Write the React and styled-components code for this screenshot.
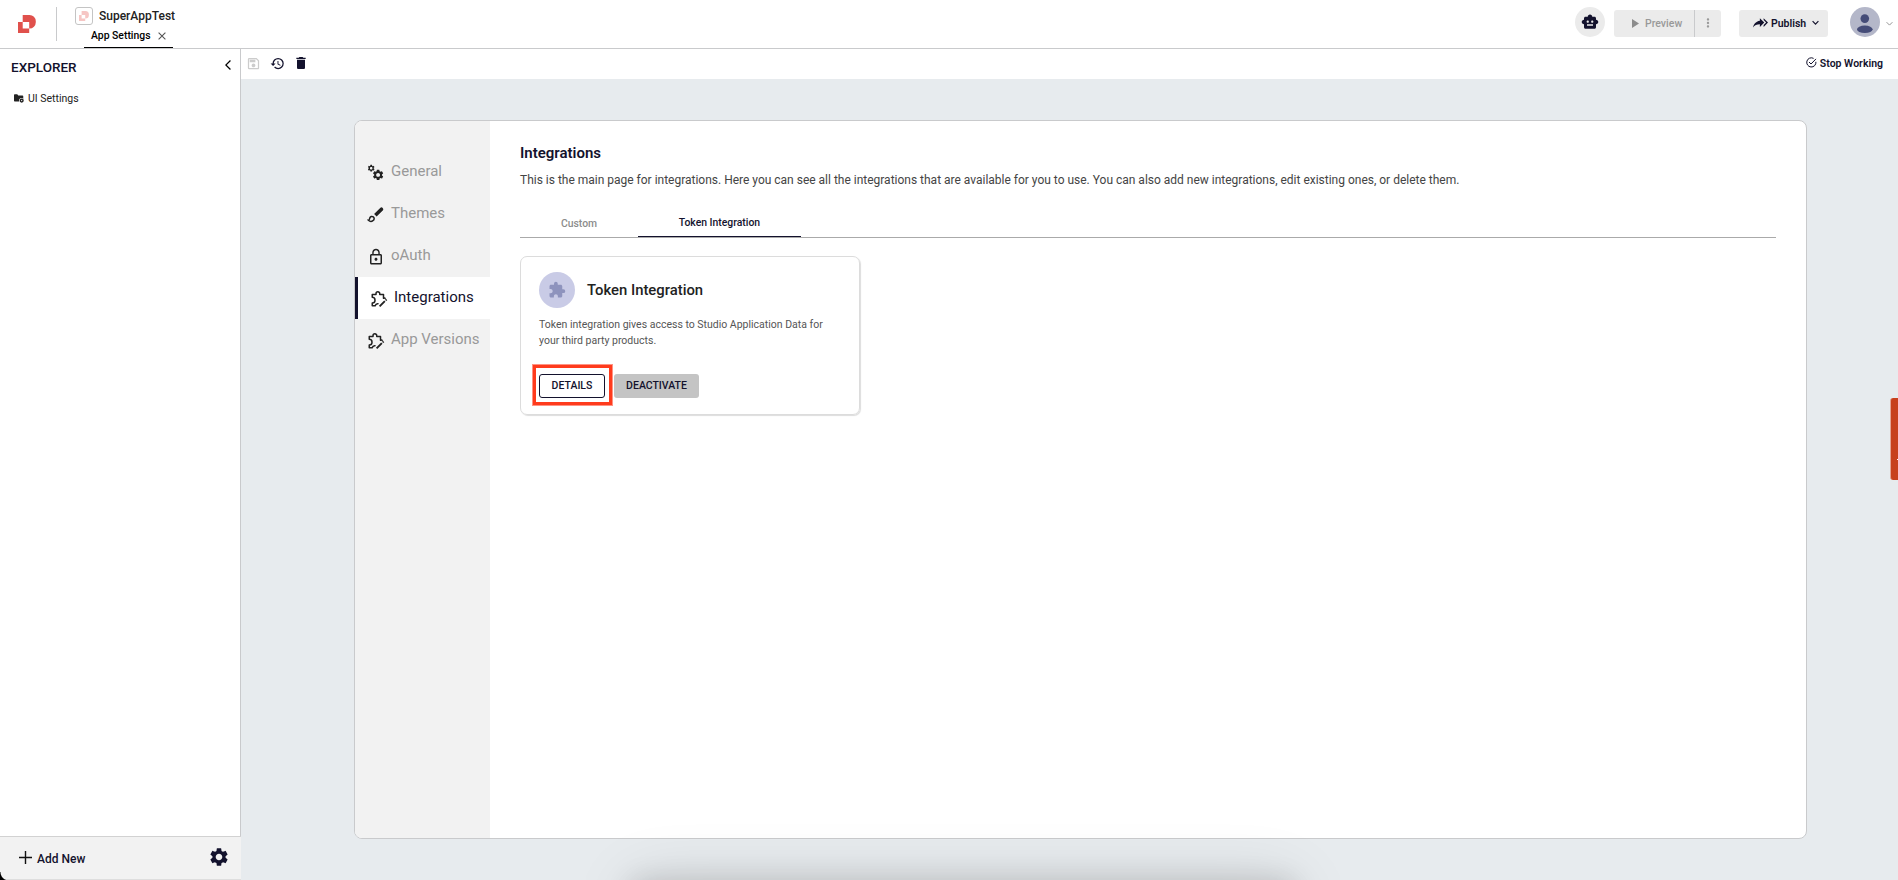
import React from "react";
import styled, { createGlobalStyle, css } from "styled-components";
import {
  MdSmartToy,
  MdHistory,
  MdDelete,
  MdOutlineSave,
  MdArrowBackIosNew,
  MdSettings,
  MdLockOutline,
  MdExtension,
  MdMoreVert,
} from "react-icons/md";

const ink = "#13122d";
const line = "#c9cacc";

const GlobalStyle = createGlobalStyle`
  * { box-sizing: border-box; }
  body {
    margin: 0;
    font-family: Roboto, "Liberation Sans", sans-serif;
    color: ${ink};
    overflow: hidden;
  }
  svg { display: block; flex: none; }
  h1, h2, p { margin: 0; }
  button { font: inherit; color: inherit; padding: 0; border: 0; background: none; }
`;

const Page = styled.div`
  position: relative;
  display: flex;
  flex-direction: column;
  height: 880px;
  overflow: hidden;
  background: #e7ebee;
`;

/* ---------- header ---------- */

const Header = styled.header`
  flex: none;
  display: flex;
  height: 49px;
  background: #fff;
  border-bottom: 1px solid ${line};
`;

const LogoArea = styled.div`
  width: 57px;
  height: 34px;
  margin-top: 7px;
  padding: 8px 0 0 18px;
  border-right: 1px solid ${line};
`;

const AppInfo = styled.div`
  padding: 7px 0 0 18px;
`;

const AppName = styled.div`
  display: flex;
  align-items: center;
  gap: 6px;
  height: 18px;
  font-size: 12px;
  font-weight: 500;
  color: #222;
`;

const AppBadge = styled.span`
  display: flex;
  align-items: center;
  justify-content: center;
  width: 18px;
  height: 18px;
  border: 1px solid #c4c4c4;
  border-radius: 3px;
`;

const OpenTab = styled.div`
  display: flex;
  align-items: center;
  gap: 7px;
  width: 89px;
  height: 23px;
  margin-left: 9px;
  padding-left: 7px;
  padding-bottom: 1px;
  border-bottom: 1px solid #000;
  font-size: 10.4px;
  font-weight: 500;
  color: #000;
`;

const HeaderActions = styled.div`
  display: flex;
  align-items: flex-start;
  margin-left: auto;
  padding-top: 7px;
`;

const RoundButton = styled.button`
  display: flex;
  align-items: center;
  justify-content: center;
  width: 30px;
  height: 30px;
  border-radius: 50%;
  background: #ebebeb;
`;

const ButtonGroup = styled.div`
  display: flex;
  height: 27px;
  margin: 3px 0 0 9px;
  border-radius: 3px;
  background: #ebebeb;
  overflow: hidden;
  color: #999;
`;

const PreviewButton = styled.button`
  display: flex;
  align-items: center;
  gap: 6px;
  width: 81px;
  padding-left: 18px;
  border-right: 1px solid ${line};
  font-size: 10.5px;
  font-weight: 500;
`;

const MoreButton = styled.button`
  display: flex;
  align-items: center;
  justify-content: center;
  width: 26px;
  padding-bottom: 1px;
`;

const PublishButton = styled.button`
  display: flex;
  align-items: center;
  width: 89px;
  height: 27px;
  margin: 3px 0 0 18px;
  padding-left: 14px;
  border-radius: 3px;
  background: #ebebeb;
  font-size: 10.5px;
  font-weight: 600;
  gap: 3px;

  svg:first-child { margin-bottom: 2px; }
  svg:last-child { margin: 0 0 2px 3px; }
`;

const AvatarArea = styled.div`
  display: flex;
  align-items: center;
  gap: 6px;
  margin: 0 5px 0 22px;

  svg:last-child { margin-top: 3px; }
`;

/* ---------- body ---------- */

const Body = styled.div`
  flex: 1;
  display: flex;
  min-height: 0;
`;

const Sidebar = styled.aside`
  flex: none;
  display: flex;
  flex-direction: column;
  width: 241px;
`;

const SidebarMain = styled.div`
  flex: 1;
  background: #fff;
  border-right: 1px solid ${line};
`;

const ExplorerHead = styled.div`
  display: flex;
  align-items: center;
  justify-content: space-between;
  height: 36px;
  padding: 0 6px 0 11px;
  font-size: 13.5px;
  font-weight: 500;

  svg { margin-bottom: 5px; color: #000; }
`;

const TreeItem = styled.div`
  display: flex;
  align-items: center;
  gap: 4px;
  height: 27px;
  padding-left: 14px;
  font-size: 10.5px;
  color: #222;
`;

const SidebarFoot = styled.div`
  display: flex;
  align-items: center;
  height: 44px;
  padding: 0 11px 0 19px;
  border-top: 1px solid #d2d2d2;
  border-bottom: 1px solid #dedede;
  background: #f2f2f2;
  font-size: 12px;
  font-weight: 500;
  gap: 5px;

  span { padding-top: 2px; }
  svg:first-child { margin-bottom: 2px; }
  svg:last-child { margin: 0 0 3px auto; }
`;

const Main = styled.main`
  flex: 1;
  display: flex;
  flex-direction: column;
  min-width: 0;
`;

const Toolbar = styled.div`
  flex: none;
  display: flex;
  align-items: center;
  height: 30px;
  padding: 0 15px 2px 5px;
  background: #fff;
`;

const ToolIcons = styled.div`
  display: flex;
  align-items: center;
  gap: 8.5px;
`;

const StopWorking = styled.div`
  display: flex;
  align-items: center;
  gap: 3px;
  margin-left: auto;
  font-size: 10.5px;
  font-weight: 600;

  svg { margin-bottom: 1px; }
`;

const Panel = styled.section`
  display: flex;
  width: 1453px;
  height: 719px;
  margin: 41px 0 0 113px;
  border: 1px solid ${line};
  border-radius: 8px;
  background: #fff;
  overflow: hidden;
`;

const SettingsNav = styled.nav`
  flex: none;
  width: 135px;
  padding-top: 30px;
  background: #f2f2f2;
`;

const NavItem = styled.div`
  display: flex;
  align-items: center;
  gap: 6px;
  height: 42px;
  padding-left: 12px;
  font-size: 15px;
  color: #999;
  white-space: nowrap;

  svg { margin-top: 1px; color: #222; }
  span { padding-bottom: 2px; }

  ${(p) =>
    p.$active &&
    css`
      border-left: 3px solid ${ink};
      background: #fff;
      color: ${ink};
    `}
`;

const Content = styled.div`
  flex: 1;
  padding: 21px 30px 0;
`;

const Title = styled.h1`
  font-size: 15px;
  line-height: 22px;
  font-weight: 600;
`;

const Lead = styled.p`
  margin-top: 6px;
  font-size: 12px;
  line-height: 20px;
  color: #444;
  letter-spacing: -0.006px;
`;

const Tabs = styled.div`
  display: flex;
  height: 31px;
  margin-top: 17px;
  border-bottom: 1px solid #aaa;
`;

const Tab = styled.div`
  display: flex;
  justify-content: center;
  width: ${(p) => p.$width}px;
  height: 30px;
  padding-top: ${(p) => (p.$active ? 9 : 10)}px;
  border-bottom: 1px solid ${(p) => (p.$active ? ink : "transparent")};
  font-size: 10.4px;
  line-height: 14px;
  font-weight: 500;
  color: ${(p) => (p.$active ? ink : "#8c8c8c")};
`;

const Card = styled.article`
  width: 340px;
  height: 159px;
  margin-top: 18px;
  padding: 15px 18px 0;
  border: 1px solid #dcdcdc;
  border-radius: 7px;
  box-shadow: 1px 1px 1px #ddd;
`;

const CardHead = styled.div`
  display: flex;
  align-items: center;
  gap: 12px;
  height: 36px;
`;

const CardIcon = styled.span`
  display: flex;
  align-items: center;
  justify-content: center;
  width: 36px;
  height: 36px;
  border-radius: 50%;
  background: #c9cbe6;
  color: #8e93bd;
`;

const CardTitle = styled.h2`
  font-size: 14.85px;
  font-weight: 500;
  color: #222;
`;

const CardText = styled.p`
  margin-top: 9px;
  font-size: 10.5px;
  line-height: 16px;
  color: #555;
`;

const CardActions = styled.div`
  display: flex;
  gap: 9px;
  margin-top: 25px;
`;

const CardButton = styled.button`
  position: relative;
  width: ${(p) => (p.$filled ? 85 : 66)}px;
  height: 24px;
  padding-bottom: 1px;
  border: ${(p) => (p.$filled ? "0" : `1px solid ${ink}`)};
  border-radius: 3px;
  background: ${(p) => (p.$filled ? "#c4c4c4" : "#fff")};
  font-size: 10.5px;
  font-weight: 500;
`;

const Highlight = styled.span`
  position: absolute;
  inset: -10px -8px -8px -7px;
  border: 3px solid #ff3b1d;
  box-shadow: 0 0 0 1px rgba(255, 59, 29, 0.55);
`;

/* ---------- overlays ---------- */

const FeedbackTab = styled.div`
  position: absolute;
  top: 398px;
  right: 0;
  width: 8px;
  height: 82px;
  border-left: 1px solid #e3a494;
  border-radius: 3px 0 0 3px;
  background: #c7401d;

  &::after {
    content: "";
    position: absolute;
    right: 0;
    top: 61px;
    width: 1px;
    height: 1px;
    background: #fff;
  }
`;

const DockShadow = styled.div`
  position: absolute;
  left: 632px;
  top: 881px;
  width: 662px;
  height: 60px;
  box-shadow: 0 0 28px rgba(0, 0, 0, 0.14), 0 0 64px rgba(0, 0, 0, 0.12);
`;

const WindowCorner = styled.div`
  position: absolute;
  left: 0;
  bottom: 0;
  width: 9px;
  height: 8px;
  background: radial-gradient(circle at 100% 0, transparent 8px, #000 9px);
`;

/* ---------- icons ---------- */

const Logo = ({ size, color }) => (
  <svg width={size} height={size} viewBox="0 0 18 18" fill={color}>
    <path d="M4.7 0H11.5A6.3 6.3 0 0 1 17.8 6.3V7.2A6.3 6.3 0 0 1 11.5 13.5H11.2V7H4.7Z" />
    <path d="M0 7H4.7V13.5H11.2V18H0Z" />
  </svg>
);

const Close = () => (
  <svg width="8" height="8" viewBox="0 0 8 8" stroke="#555" strokeWidth="1.1">
    <path d="M0.6 0.6L7.4 7.4M7.4 0.6L0.6 7.4" />
  </svg>
);

const Play = () => (
  <svg width="7" height="9" viewBox="0 0 7 9" fill="#8c8c8c">
    <path d="M0 0L7 4.5L0 9Z" />
  </svg>
);

const ShareAll = () => (
  <svg width="15" height="15" viewBox="0 0 24 24" fill={ink}>
    <path d="M11 5V9C4 10 1 15 0 20C2.5 16.5 6 14.9 11 14.9V19L18 12L11 5M17 5V8L21 12L17 16V19L24 12" />
  </svg>
);

const ChevronDown = ({ color, width }) => (
  <svg width="7" height="6" viewBox="0 0 7 6" fill="none" stroke={color} strokeWidth={width}>
    <path d="M0.6 1.2L3.5 4.1L6.4 1.2" />
  </svg>
);

const Avatar = () => (
  <svg width="30" height="30" viewBox="0 0 30 30">
    <circle cx="15" cy="15" r="15" fill="#b4b7c9" />
    <circle cx="14.8" cy="11.6" r="4.3" fill="#454c78" />
    <ellipse cx="14.8" cy="22.3" rx="7.8" ry="3.7" fill="#454c78" />
  </svg>
);

const FolderGear = () => (
  <svg width="10" height="9" viewBox="0 0 20 18">
    <path d="M0 2A1.5 1.5 0 0 1 1.5 .5H6.5L8.5 3H17A1.5 1.5 0 0 1 18.5 4.5V15H1.5A1.5 1.5 0 0 1 0 13.5Z" fill="#222" />
    <circle cx="15.2" cy="13" r="5" fill="#fff" />
    <circle cx="15.4" cy="13.2" r="2.7" fill="none" stroke="#222" strokeWidth="2.8" />
  </svg>
);

const CheckCircle = () => (
  <svg width="11" height="11" viewBox="0 0 11 11" fill="none" stroke={ink} strokeWidth="1">
    <path d="M9.9 4.8A4.6 4.6 0 1 1 7.6 1.4" />
    <path d="M3 5L5 7L10 1.9" />
  </svg>
);

const Gears = () => (
  <svg width="18" height="18" viewBox="0 0 18 18">
    <MdSettings size={8.4} x={0} y={0} />
    <MdSettings size={13} x={4.6} y={4.4} />
  </svg>
);

const Brush = () => (
  <svg width="18" height="18" viewBox="0 0 18 18">
    <path d="M13.2 2A1.5 1.5 0 0 1 15.8 4.4L9.6 10.4L7.1 8.1Z" fill="#222" />
    <path d="M1.4 14.2C2.6 14.2 2.4 13 2.8 12.1A2.2 2.2 0 1 1 5.9 14.6C4.7 15.6 2.6 15.4 1.4 14.2Z" fill="none" stroke="#222" strokeWidth="1.5" />
  </svg>
);

const PuzzleEdit = () => (
  <svg width="18" height="18" viewBox="0 0 24 24" fill="none" stroke="#222" strokeWidth="2">
    <path d="M20.8 11.6A2.6 2.6 0 0 0 18 11V6H13V4.9A2.5 2.5 0 0 0 8 4.9V6H3V9.8A3.7 3.7 0 0 1 3 17.2V21H6.9A3.7 3.7 0 0 1 11.4 18.4" strokeLinejoin="round" />
    <path d="M12.8 21.8L19.8 14.8M20.8 13.8L22.2 12.6" strokeWidth="2.5" />
  </svg>
);

const Plus = () => (
  <svg width="13" height="13" viewBox="0 0 13 13" stroke="#111" strokeWidth="1.4">
    <path d="M6.5 0V13M0 6.5H13" />
  </svg>
);

const navItems = [
  { label: "General", icon: <Gears /> },
  { label: "Themes", icon: <Brush /> },
  { label: "oAuth", icon: <MdLockOutline size={18} /> },
  { label: "Integrations", icon: <PuzzleEdit />, active: true },
  { label: "App Versions", icon: <PuzzleEdit /> },
];

export default function App() {
  return (
    <>
      <GlobalStyle />
      <Page>
        <Header>
          <LogoArea>
            <Logo size={18} color="#e0514c" />
          </LogoArea>
          <AppInfo>
            <AppName>
              <AppBadge>
                <Logo size={10} color="#f6c6c4" />
              </AppBadge>
              SuperAppTest
            </AppName>
            <OpenTab>
              App Settings
              <Close />
            </OpenTab>
          </AppInfo>
          <HeaderActions>
            <RoundButton>
              <MdSmartToy size={18} />
            </RoundButton>
            <ButtonGroup>
              <PreviewButton>
                <Play />
                Preview
              </PreviewButton>
              <MoreButton>
                <MdMoreVert size={14} />
              </MoreButton>
            </ButtonGroup>
            <PublishButton>
              <ShareAll />
              Publish
              <ChevronDown color={ink} width={1.2} />
            </PublishButton>
            <AvatarArea>
              <Avatar />
              <ChevronDown color="#888" width={0.9} />
            </AvatarArea>
          </HeaderActions>
        </Header>

        <Body>
          <Sidebar>
            <SidebarMain>
              <ExplorerHead>
                EXPLORER
                <MdArrowBackIosNew size={12} />
              </ExplorerHead>
              <TreeItem>
                <FolderGear />
                UI Settings
              </TreeItem>
            </SidebarMain>
            <SidebarFoot>
              <Plus />
              <span>Add New</span>
              <MdSettings size={22} />
            </SidebarFoot>
          </Sidebar>

          <Main>
            <Toolbar>
              <ToolIcons>
                <MdOutlineSave size={15} color="#ccc" />
                <MdHistory size={15} />
                <MdDelete size={16} />
              </ToolIcons>
              <StopWorking>
                <CheckCircle />
                Stop Working
              </StopWorking>
            </Toolbar>

            <Panel>
              <SettingsNav>
                {navItems.map((item) => (
                  <NavItem key={item.label} $active={item.active}>
                    {item.icon}
                    <span>{item.label}</span>
                  </NavItem>
                ))}
              </SettingsNav>
              <Content>
                <Title>Integrations</Title>
                <Lead>
                  This is the main page for integrations. Here you can see all the integrations that are
                  available for you to use. You can also add new integrations, edit existing ones, or
                  delete them.
                </Lead>
                <Tabs>
                  <Tab $width={118}>Custom</Tab>
                  <Tab $width={163} $active>
                    Token Integration
                  </Tab>
                </Tabs>
                <Card>
                  <CardHead>
                    <CardIcon>
                      <MdExtension size={18} />
                    </CardIcon>
                    <CardTitle>Token Integration</CardTitle>
                  </CardHead>
                  <CardText>
                    Token integration gives access to Studio Application Data for
                    <br />
                    your third party products.
                  </CardText>
                  <CardActions>
                    <CardButton>
                      DETAILS
                      <Highlight />
                    </CardButton>
                    <CardButton $filled>DEACTIVATE</CardButton>
                  </CardActions>
                </Card>
              </Content>
            </Panel>
          </Main>
        </Body>

        <FeedbackTab />
        <DockShadow />
        <WindowCorner />
      </Page>
    </>
  );
}
